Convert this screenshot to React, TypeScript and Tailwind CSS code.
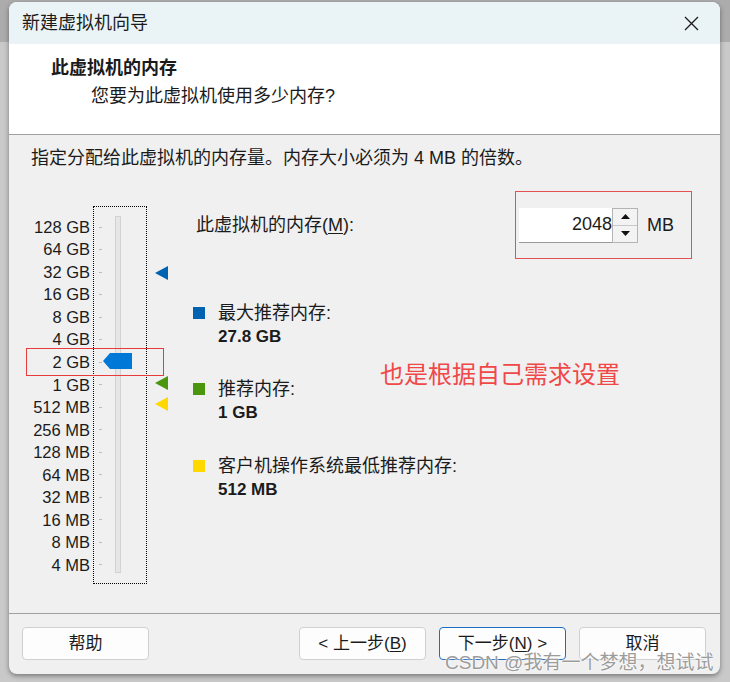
const scale = [
  '128 GB', '64 GB', '32 GB', '16 GB', '8 GB', '4 GB', '2 GB', '1 GB',
  '512 MB', '256 MB', '128 MB', '64 MB', '32 MB', '16 MB', '8 MB', '4 MB',
];

const legend = [
  { color: 'bg-[#0063b1]', label: '最大推荐内存:', value: '27.8 GB', gap: 'mt-[42px]' },
  { color: 'bg-[#4a960f]', label: '推荐内存:', value: '1 GB', gap: 'mt-[28px]' },
  { color: 'bg-[#ffd800]', label: '客户机操作系统最低推荐内存:', value: '512 MB', gap: 'mt-[29px]' },
];

const Marker = ({ color, top }: { color: string; top: string }) => (
  <svg className={`absolute left-[61px] ${top}`} width="14" height="14" viewBox="0 0 14 14">
    <polygon points="0,7 13,0 13,14" fill={color} />
  </svg>
);

const Button = ({ children, primary }: { children: React.ReactNode; primary?: boolean }) => (
  <div
    className={`w-[127px] h-[33px] rounded-[4px] bg-[#fdfdfd] flex items-center justify-center text-[17px] ${
      primary ? 'border border-[#1a6fc4]' : 'border border-[#d0d0d0]'
    }`}
  >
    {children}
  </div>
);

export default function App() {
  return (
    <div className="w-[730px] h-[682px] bg-[linear-gradient(#acacac_0_42px,#c9c9c9_42px)] pt-[2px] pl-[9px] font-['Liberation_Sans','Noto_Sans_CJK_SC',sans-serif] text-[#1b1b1b]">
      <div className="relative w-[711px] h-[672px] rounded-[8px] overflow-hidden bg-[#f0f0f0] shadow-[0_2px_5px_rgba(0,0,0,0.4)] flex flex-col">
        {/* title bar */}
        <div className="h-[42px] shrink-0 bg-[#eaf3f6] flex items-center pl-[13px] pr-[21px] text-[18px]">
          <span>新建虚拟机向导</span>
          <svg className="ml-auto" width="15" height="15" viewBox="0 0 15 15">
            <path d="M1 1L14 14M14 1L1 14" stroke="#1b1b1b" strokeWidth="1.3" />
          </svg>
        </div>

        {/* header */}
        <div className="h-[91px] shrink-0 bg-white border-b border-[#a0a0a0] pl-[42px] pt-[12px]">
          <div className="font-bold text-[18px] leading-[24px]">此虚拟机的内存</div>
          <div className="pl-[40px] mt-[4px] text-[18px] leading-[24px]">您要为此虚拟机使用多少内存?</div>
        </div>

        {/* body */}
        <div className="flex-1 flex flex-col">
          <div className="pl-[22px] pt-[11px] text-[18px] leading-[24px]">
            指定分配给此虚拟机的内存量。内存大小必须为 4 MB 的倍数。
          </div>

          <div className="flex mt-[21px]">
            {/* slider */}
            <div className="flex mt-[15px]">
              <div className="w-[81px] pt-[10px] flex flex-col text-[16.5px]">
                {scale.map((s) => (
                  <div key={s} className="h-[22.53px] flex items-center justify-end">
                    {s}
                  </div>
                ))}
              </div>
              <div className="relative ml-[3px] w-[54px] h-[378px] border border-dotted border-black flex">
                <div className="pl-[5px] pt-[9px] flex flex-col">
                  {scale.map((s) => (
                    <div key={s} className="h-[22.53px] flex items-center">
                      <div className="w-[3px] h-[1px] bg-[#bdbdbd]" />
                    </div>
                  ))}
                </div>
                <div className="ml-[13px] mt-[9px] w-[6px] h-[357px] bg-[#e6e6e6] border border-[#d2d2d2]" />
                <svg className="absolute left-[9px] top-[146px]" width="29" height="16" viewBox="0 0 29 16">
                  <polygon points="0,8 7,0 29,0 29,16 7,16" fill="#0078d7" />
                </svg>
                <Marker color="#0063b1" top="top-[59px]" />
                <Marker color="#4a960f" top="top-[169px]" />
                <Marker color="#ffd800" top="top-[190px]" />
              </div>
            </div>

            {/* right panel */}
            <div className="ml-[46px] mr-[28px] flex-1 flex flex-col">
              <div className="h-[68px] flex items-center">
                <span className="pl-[3px] text-[18px]">
                  此虚拟机的内存(<span className="underline underline-offset-2">M</span>):
                </span>
                <div className="ml-auto w-[177px] h-[68px] border border-[#e25252] flex items-center pl-[3px]">
                  <div className="w-[93px] h-[35px] bg-white border-b border-[#9a9a9a] flex items-center justify-end text-[18px]">
                    2048
                  </div>
                  <div className="w-[26px] h-[35px] border border-[#b4b4b4] flex flex-col">
                    <div className="flex-1 bg-[#f3f3f3] border-b border-[#c8c8c8] flex items-center justify-center">
                      <svg width="9" height="5" viewBox="0 0 9 5">
                        <polygon points="0,5 4.5,0 9,5" fill="#111" />
                      </svg>
                    </div>
                    <div className="flex-1 bg-[#f3f3f3] flex items-center justify-center">
                      <svg width="9" height="5" viewBox="0 0 9 5">
                        <polygon points="0,0 4.5,5 9,0" fill="#111" />
                      </svg>
                    </div>
                  </div>
                  <span className="ml-[9px] text-[18px]">MB</span>
                </div>
              </div>

              {legend.map((l) => (
                <div key={l.label} className={`${l.gap} flex`}>
                  <div className={`w-[12px] h-[12px] mt-[6px] ${l.color}`} />
                  <div className="ml-[13px] flex flex-col">
                    <span className="text-[18px] leading-[24px]">{l.label}</span>
                    <span className="text-[17px] leading-[24px] font-bold">{l.value}</span>
                  </div>
                </div>
              ))}
            </div>
          </div>
        </div>

        {/* footer */}
        <div className="h-[61px] shrink-0 border-t border-[#a0a0a0] flex pt-[13px] pl-[13px] pr-[14px]">
          <Button>帮助</Button>
          <div className="ml-auto flex gap-[13px]">
            <Button>
              &lt; 上一步(<span className="underline underline-offset-2">B</span>)
            </Button>
            <Button primary>
              下一步(<span className="underline underline-offset-2">N</span>) &gt;
            </Button>
            <Button>取消</Button>
          </div>
        </div>

        {/* annotations */}
        <div className="absolute left-[17px] top-[346px] w-[138px] h-[28px] border border-[#e83b3b]" />
        <div className="absolute left-[371px] top-[358px] text-[24px] leading-[30px] text-[#f04848]">
          也是根据自己需求设置
        </div>
        <div className="absolute left-[436px] top-[650px] text-[19px] leading-[22px] text-[#9c9c9c] [text-shadow:0_0_2px_#fff,0_0_2px_#fff]">
          CSDN @我有一个梦想，想试试
        </div>
      </div>
    </div>
  );
}
